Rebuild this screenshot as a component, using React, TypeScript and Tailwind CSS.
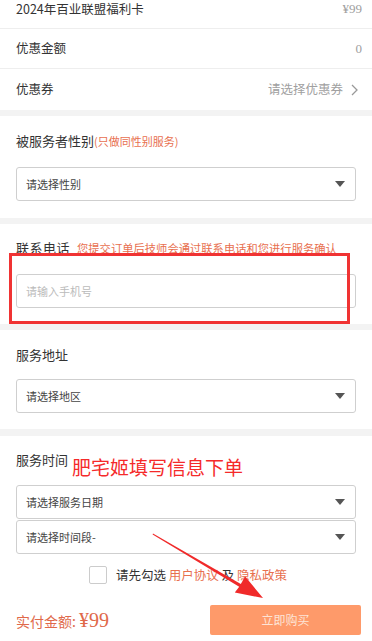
import React from 'react';

const font = { fontFamily: '"Noto Sans CJK SC", "Noto Sans", sans-serif' };

const Caret = () => (
  <svg width="10" height="6" viewBox="0 0 10 6" className="shrink-0">
    <path d="M0 0 L10 0 L5 6 Z" fill="#555" />
  </svg>
);

const Select = ({ label }: { label: string }) => (
  <div className="flex items-center justify-between h-[34px] border border-[#cfcfcf] rounded-[3px] pl-[9px] pr-[10px] bg-white">
    <span className="text-[11px] text-[#444]">{label}</span>
    <Caret />
  </div>
);

const Band = ({ h = 'h-[6px]' }: { h?: string }) => <div className={`${h} bg-[#f3f3f3]`} />;

export default function App() {
  return (
    <div className="relative w-[372px] h-[641px] overflow-hidden bg-white" style={font}>
      <div className="flex items-start justify-between h-[29px] pt-[1px] pl-4 pr-[10px] border-b border-[#eeeeee]">
        <span className="text-[12.5px] leading-[16px] text-[#333]">2024年百业联盟福利卡</span>
        <span className="text-[13px] leading-[16px] text-[#a0a0a0] font-[Liberation_Serif]">¥99</span>
      </div>
      <div className="flex items-center justify-between h-[40px] pl-4 pr-[10px] border-b border-[#eeeeee]">
        <span className="text-[12.5px] text-[#333]">优惠金额</span>
        <span className="text-[13px] text-[#a0a0a0] font-[Liberation_Serif]">0</span>
      </div>
      <div className="flex items-center justify-between h-[41px] pl-4 pr-[14px]">
        <span className="text-[12.5px] text-[#333]">优惠券</span>
        <span className="flex items-center gap-[8px] text-[12.5px] text-[#a0a0a0]">
          请选择优惠券
          <svg width="7" height="12" viewBox="0 0 7 12">
            <path d="M1 1 L6 6 L1 11" fill="none" stroke="#999" strokeWidth="1.3" />
          </svg>
        </span>
      </div>
      <Band />

      <section className="px-4 pt-[15px] pb-[17px]">
        <div className="h-[20px] flex items-center">
          <span className="text-[13px] text-[#333]">被服务者性别</span>
          <span className="text-[11px] text-[#e8704f]">(只做同性别服务)</span>
        </div>
        <div className="mt-[16px]">
          <Select label="请选择性别" />
        </div>
      </section>
      <Band />

      <section className="px-4 pt-[14px] pb-[16px]">
        <div className="h-[20px] flex items-center gap-[7px]">
          <span className="text-[13px] text-[#333] tracking-[0.5px]">联系电话</span>
          <span className="text-[11.3px] text-[#e8704f]">您提交订单后技师会通过联系电话和您进行服务确认</span>
        </div>
        <div className="mt-[16px] h-[34px] border border-[#cfcfcf] rounded-[3px] flex items-center pl-[9px]">
          <span className="text-[11px] text-[#bbbbbb]">请输入手机号</span>
        </div>
      </section>
      <Band />

      <section className="px-4 pt-[15px] pb-[16px]">
        <div className="h-[20px] flex items-center">
          <span className="text-[13px] text-[#333]">服务地址</span>
        </div>
        <div className="mt-[14px]">
          <Select label="请选择地区" />
        </div>
      </section>
      <Band h="h-[7px]" />

      <section className="px-4 pt-[14px]">
        <div className="h-[20px] flex items-center">
          <span className="text-[13px] text-[#333]">服务时间</span>
        </div>
        <div className="mt-[15px] flex flex-col gap-[1px]">
          <Select label="请选择服务日期" />
          <Select label="请选择时间段-" />
        </div>
        <div className="flex items-center justify-center gap-[9px] mt-[12px] pl-[4px]">
          <span className="w-[18px] h-[18px] border border-[#cccccc] rounded-[2px] bg-white" />
          <span className="text-[12.5px] text-[#333]">
            请先勾选 <span className="text-[#e8704f]">用户协议</span> 及 <span className="text-[#e8704f]">隐私政策</span>
          </span>
        </div>
        <div className="flex items-center justify-between mt-[20px]">
          <span className="text-[14px] text-[#e0694a] flex items-baseline">
            实付金额:
            <span className="ml-[3px] text-[20px] font-[Liberation_Serif]">¥99</span>
          </span>
          <button className="w-[151px] h-[30px] rounded-[2px] bg-[#fe9a6a] text-[12px] text-[#fde4d6] mr-[-5px]">
            立即购买
          </button>
        </div>
      </section>

      {/* annotation overlays */}
      <div className="absolute left-[9px] top-[253px] w-[341px] h-[71px] border-[3px] border-[#f03333] pointer-events-none" />
      <div className="absolute left-[72px] top-[455px] text-[19px] leading-[24px] text-[#f52a2a] pointer-events-none">
        肥宅姬填写信息下单
      </div>
      <svg className="absolute left-0 top-0 pointer-events-none" width="372" height="641" viewBox="0 0 372 641">
        <polygon
          points="153,533.6 240.8,584 245.2,576.5 263,598 234.8,592.5 239.2,586.8 152.6,534.4"
          fill="#f02a2a"
        />
      </svg>
    </div>
  );
}
